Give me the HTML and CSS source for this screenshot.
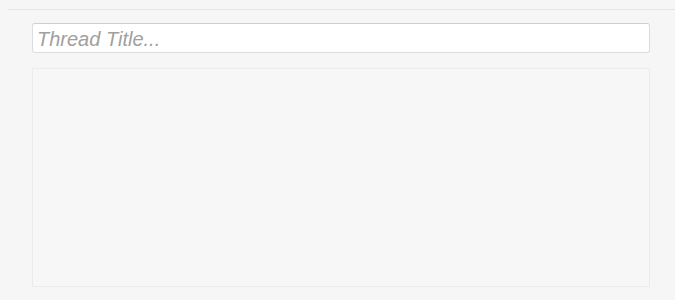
FILE: index.html
```html
<!DOCTYPE html>
<html>
<head>
<meta charset="utf-8">
<link rel="stylesheet" href="styles.css">
</head>
<body>
<div class="page">
  <hr class="divider">
  <form class="thread-form">
    <input class="title-input" type="text" placeholder="Thread Title...">
    <div class="body-box"></div>
  </form>
</div>
</body>
</html>
```
FILE: styles.css
```css
html, body {
  margin: 0;
  padding: 0;
  background: #f6f6f6;
  font-family: "Liberation Sans", Arial, sans-serif;
}
.page {
  padding: 9px 0 0 8px;
}
.divider {
  margin: 0;
  border: 0;
  border-top: 1px solid #e6e6e6;
  height: 0;
}
.thread-form {
  display: flex;
  flex-direction: column;
  gap: 15px;
  padding: 13px 25px 0 24px;
}
.title-input {
  box-sizing: border-box;
  width: 100%;
  height: 30px;
  margin: 0;
  padding: 3px 4px 0;
  border: 1px solid #dcdcdc;
  border-top-color: #cfcfcf;
  border-radius: 3px;
  background: #fff;
  font-family: "Liberation Sans", Arial, sans-serif;
  font-size: 20px;
  line-height: 24px;
  font-style: italic;
  color: #333;
  outline: none;
}
.title-input::placeholder {
  color: #a0a0a0;
  font-style: italic;
}
.body-box {
  box-sizing: border-box;
  height: 219px;
  border: 1px solid #ebebeb;
  background: #f7f7f7;
}
```
